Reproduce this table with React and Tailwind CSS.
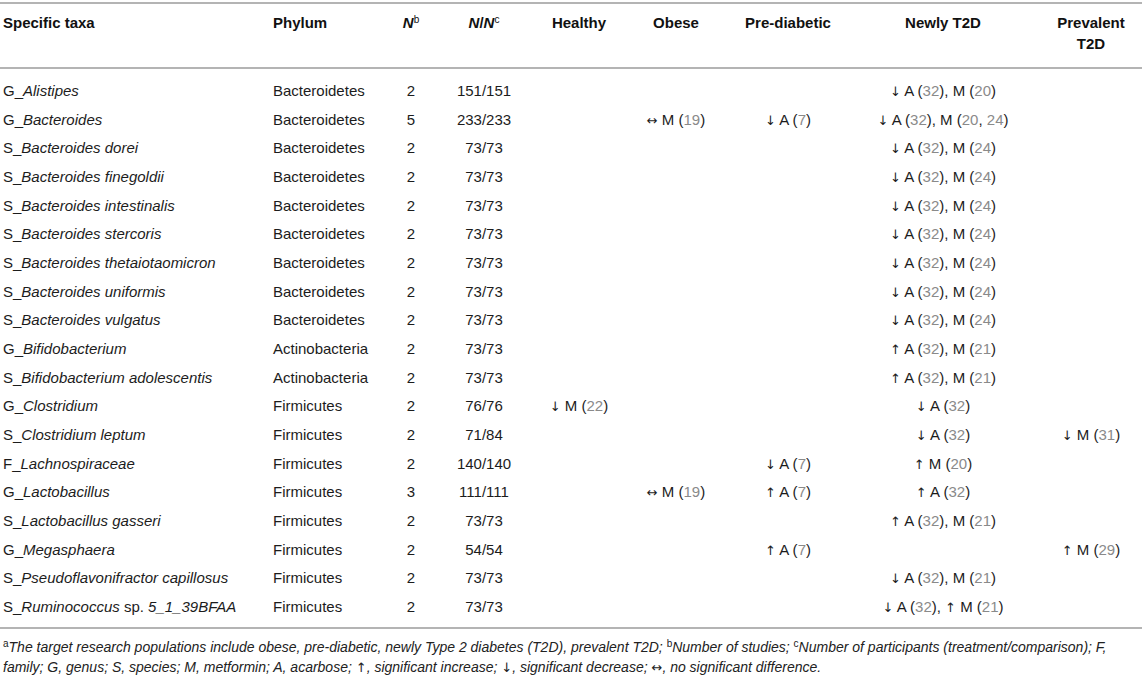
const COLS =
  "grid grid-cols-[270px_120px_42px_104px_86px_108px_116px_194px_102px]";

const rows = [
  ["G_", "Alistipes", "", "Bacteroidetes", "2", "151/151", "", "", "", "↓ A ({32}), M ({20})", ""],
  ["G_", "Bacteroides", "", "Bacteroidetes", "5", "233/233", "", "↔ M ({19})", "↓ A ({7})", "↓ A ({32}), M ({20}, {24})", ""],
  ["S_", "Bacteroides dorei", "", "Bacteroidetes", "2", "73/73", "", "", "", "↓ A ({32}), M ({24})", ""],
  ["S_", "Bacteroides finegoldii", "", "Bacteroidetes", "2", "73/73", "", "", "", "↓ A ({32}), M ({24})", ""],
  ["S_", "Bacteroides intestinalis", "", "Bacteroidetes", "2", "73/73", "", "", "", "↓ A ({32}), M ({24})", ""],
  ["S_", "Bacteroides stercoris", "", "Bacteroidetes", "2", "73/73", "", "", "", "↓ A ({32}), M ({24})", ""],
  ["S_", "Bacteroides thetaiotaomicron", "", "Bacteroidetes", "2", "73/73", "", "", "", "↓ A ({32}), M ({24})", ""],
  ["S_", "Bacteroides uniformis", "", "Bacteroidetes", "2", "73/73", "", "", "", "↓ A ({32}), M ({24})", ""],
  ["S_", "Bacteroides vulgatus", "", "Bacteroidetes", "2", "73/73", "", "", "", "↓ A ({32}), M ({24})", ""],
  ["G_", "Bifidobacterium", "", "Actinobacteria", "2", "73/73", "", "", "", "↑ A ({32}), M ({21})", ""],
  ["S_", "Bifidobacterium adolescentis", "", "Actinobacteria", "2", "73/73", "", "", "", "↑ A ({32}), M ({21})", ""],
  ["G_", "Clostridium", "", "Firmicutes", "2", "76/76", "↓ M ({22})", "", "", "↓ A ({32})", ""],
  ["S_", "Clostridium leptum", "", "Firmicutes", "2", "71/84", "", "", "", "↓ A ({32})", "↓ M ({31})"],
  ["F_", "Lachnospiraceae", "", "Firmicutes", "2", "140/140", "", "", "↓ A ({7})", "↑ M ({20})", ""],
  ["G_", "Lactobacillus", "", "Firmicutes", "3", "111/111", "", "↔ M ({19})", "↑ A ({7})", "↑ A ({32})", ""],
  ["S_", "Lactobacillus gasseri", "", "Firmicutes", "2", "73/73", "", "", "", "↑ A ({32}), M ({21})", ""],
  ["G_", "Megasphaera", "", "Firmicutes", "2", "54/54", "", "", "↑ A ({7})", "", "↑ M ({29})"],
  ["S_", "Pseudoflavonifractor capillosus", "", "Firmicutes", "2", "73/73", "", "", "", "↓ A ({32}), M ({21})", ""],
  ["S_", "Ruminococcus", " sp. ", "Firmicutes", "2", "73/73", "", "", "", "↓ A ({32}), ↑ M ({21})", ""],
];

function Arrowed({ text }) {
  // arrows come out tiny in Liberation Sans, DejaVu draws them full height
  const bits = text.split(/([↑↓↔])/);
  return bits.map((b, i) =>
    i % 2 === 1 ? (
      <span key={i} className="font-['DejaVu_Sans'] text-[13px]">{b}</span>
    ) : (
      <span key={i}>{b}</span>
    )
  );
}

function Effect({ text }) {
  if (!text) return null;
  const parts = text.split(/\{(\d+)\}/);
  return (
    <span className="whitespace-nowrap">
      {parts.map((p, i) =>
        i % 2 === 1 ? (
          <span key={i} className="text-[#8a8a8a]">{p}</span>
        ) : (
          <Arrowed key={i} text={p} />
        )
      )}
    </span>
  );
}

function Rule() {
  return <div className="h-[2px] bg-[#b4b4b4]" />;
}

export default function App() {
  return (
    <div className="w-[1142px] h-[679px] bg-white text-[#1c1c1c] text-[15px] font-['Liberation_Sans',Arial,sans-serif] pt-[2px]">
      <Rule />
      <div className={`${COLS} pt-[8px] pb-[13px] leading-[21px] font-bold text-[#111]`}>
        <div className="pl-[3px]">Specific taxa</div>
        <div className="pl-[3px]">Phylum</div>
        <div className="text-center">
          <i>N</i>
          <sup className="font-normal text-[10px]">b</sup>
        </div>
        <div className="text-center">
          <i>N</i>/<i>N</i>
          <sup className="font-normal text-[10px]">c</sup>
        </div>
        <div className="text-center">Healthy</div>
        <div className="text-center">Obese</div>
        <div className="text-center">Pre-diabetic</div>
        <div className="text-center">Newly T2D</div>
        <div className="text-center px-[8px]">Prevalent T2D</div>
      </div>
      <Rule />
      <div className="pt-[8px] pb-[6px]">
        {rows.map((r, idx) => (
          <div key={idx} className={`${COLS} h-[28.67px] items-center`}>
            <div className="pl-[3px] whitespace-nowrap">
              {r[0]}
              <i>{r[1]}</i>
              {r[2] && (
                <>
                  {r[2]}
                  <i>5_1_39BFAA</i>
                </>
              )}
            </div>
            <div className="pl-[3px]">{r[3]}</div>
            <div className="text-center">{r[4]}</div>
            <div className="text-center">{r[5]}</div>
            <div className="text-center"><Effect text={r[6]} /></div>
            <div className="text-center"><Effect text={r[7]} /></div>
            <div className="text-center"><Effect text={r[8]} /></div>
            <div className="text-center"><Effect text={r[9]} /></div>
            <div className="text-center"><Effect text={r[10]} /></div>
          </div>
        ))}
      </div>
      <Rule />
      <p className="pt-[8px] pl-[3px] pr-[4px] italic text-[14px] leading-[20px] text-[#222]">
        <sup className="not-italic text-[10px]">a</sup>The target research populations include obese,
        pre-diabetic, newly Type 2 diabetes (T2D), prevalent T2D;{" "}
        <sup className="not-italic text-[10px]">b</sup>Number of studies;{" "}
        <sup className="not-italic text-[10px]">c</sup>Number of participants (treatment/comparison); F,
        family; G, genus; S, species; M, metformin; A, acarbose; <Arrowed text="↑" />, significant
        increase; <Arrowed text="↓" />, significant decrease; <Arrowed text="↔" />, no significant
        difference.
      </p>
    </div>
  );
}
